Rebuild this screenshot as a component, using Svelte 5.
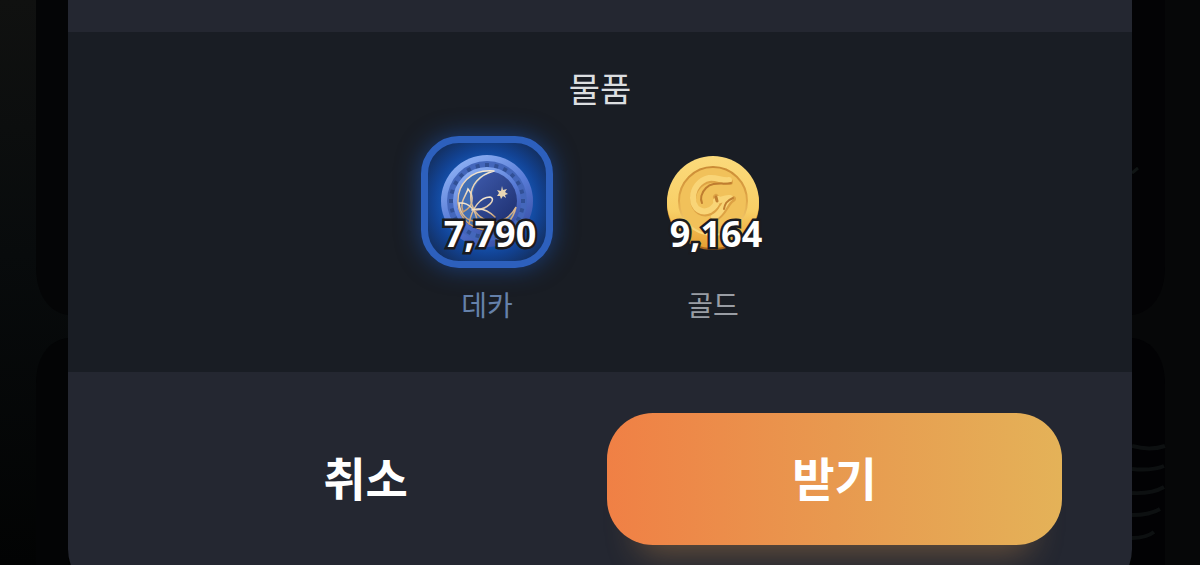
<script>
  const items = [
    { id: 'deca', label: '데카', amount: 7790 },
    { id: 'gold', label: '골드', amount: 9164 }
  ];

  // notches around the rim of the deca coin
  const notches = Array.from({ length: 24 }, (_, i) => i * 15);

  let selected = $state('deca');
</script>

<div class="screen">
  <svg class="backdrop left" viewBox="0 0 68 565" aria-hidden="true">
    <path d="M68 0H36V266C36 294 48 312 68 315Z" fill="#040506" />
    <path d="M68 338C48 340 36 358 36 384V565H68Z" fill="#030405" />
  </svg>
  <svg class="backdrop right" viewBox="0 0 68 565" aria-hidden="true">
    <path d="M0 0H33V266C33 294 21 312 0 315Z" fill="#030305" />
    <path d="M0 338C21 340 33 358 33 384V565H0Z" fill="#020204" />
    <path d="M0 173L6 168" stroke="#101515" stroke-width="3" />
    <g fill="none" stroke="#0d1011" stroke-width="4">
      <path d="M0 412Q18 417 33 412" transform="translate(0 34)" />
      <path d="M0 469Q20 471 32 466" />
      <path d="M0 493Q20 494 32 487" />
      <path d="M0 515Q18 515 28 509" />
      <path d="M0 538Q14 538 22 532" />
    </g>
  </svg>

  <main class="dialog">
    <section class="goods">
      <h2>물품</h2>
      <div class="items">
        {#each items as item}
          <button class="item" class:selected={selected === item.id} onclick={() => (selected = item.id)}>
            <span class="tile">
              {#if item.id === 'deca'}
                <svg viewBox="0 0 132 132" aria-hidden="true">
                  <defs>
                    <linearGradient id="deca-rim" x1="0.2" y1="0" x2="0.8" y2="1">
                      <stop offset="0" stop-color="#91b4f6" />
                      <stop offset="0.5" stop-color="#587bd6" />
                      <stop offset="1" stop-color="#34499f" />
                    </linearGradient>
                    <linearGradient id="deca-face" x1="0" y1="0" x2="1" y2="1">
                      <stop offset="0" stop-color="#4463b8" />
                      <stop offset="1" stop-color="#1a2a68" />
                    </linearGradient>
                    <linearGradient id="deca-line" x1="0" y1="0" x2="0" y2="1">
                      <stop offset="0" stop-color="#f4e7d2" />
                      <stop offset="1" stop-color="#c99a68" />
                    </linearGradient>
                  </defs>
                  <circle cx="66" cy="65" r="46" fill="url(#deca-rim)" />
                  <circle cx="66" cy="65" r="40" fill="#4467bb" />
                  {#each notches as angle}
                    <rect x="64" y="27" width="4" height="4" fill="#315096" transform="rotate({angle} 66 65)" />
                  {/each}
                  <circle cx="66" cy="65" r="34" fill="url(#deca-rim)" />
                  <circle cx="66" cy="65" r="30" fill="url(#deca-face)" />
                  <path d="M73 35C49 33 36 50 37 67C38 83 51 94 68 94C82 94 92 85 95 71C88 84 76 88 66 84C47 77 44 45 73 35Z" fill="#416eb4" />
                  <g fill="none" stroke="url(#deca-line)" stroke-width="1.5" stroke-linecap="round">
                    <path d="M73 35C49 33 36 49 37 67C38 83 51 94 68 94C82 94 92 85 95 71C88 84 77 88 67 85C44 77 42 43 73 35" />
                    <path d="M47 53C54 61 52 71 42 76C38 66 45 60 47 53Z" />
                    <path d="M38 67C48 66 55 74 56 85C46 86 39 78 38 67Z" />
                    <path d="M48 88C51 71 60 61 69 61C76 63 67 73 55 74" />
                    <path d="M51 74C60 71 67 74 74 81" />
                  </g>
                  <path d="M81 50L82 54L86 53L84 56L87 58L84 59L85 62L82 60L80 63L79 60L76 60L78 57L76 54L80 55Z" fill="#e9d6b4" />
                </svg>
              {:else}
                <svg viewBox="0 0 132 132" aria-hidden="true">
                  <defs>
                    <linearGradient id="gold-rim" x1="0" y1="0" x2="0" y2="1">
                      <stop offset="0" stop-color="#fbda7b" />
                      <stop offset="0.6" stop-color="#f8cf66" />
                      <stop offset="1" stop-color="#e69f32" />
                    </linearGradient>
                    <linearGradient id="gold-edge" x1="0" y1="0" x2="0" y2="1">
                      <stop offset="0" stop-color="#cb8c35" />
                      <stop offset="0.5" stop-color="#e1a849" />
                      <stop offset="1" stop-color="#fbdc80" />
                    </linearGradient>
                    <linearGradient id="gold-side" x1="0" y1="0" x2="0" y2="1">
                      <stop offset="0.5" stop-color="#e29b2f" />
                      <stop offset="1" stop-color="#a9641b" />
                    </linearGradient>
                  </defs>
                  <circle cx="66" cy="68" r="46" fill="url(#gold-side)" />
                  <circle cx="66" cy="66" r="46" fill="url(#gold-rim)" />
                  <circle cx="66" cy="65" r="34" fill="#f1c15a" stroke="url(#gold-edge)" stroke-width="2" />
                  <g fill="none" stroke-linecap="round" stroke-linejoin="round">
                    <path d="M83 46C75 46 70 43 63 44C52 46 46 55 46 64C47 75 56 80 64 76C70 73 73 65 69 61M72 67C77 67 78 62 86 63C79 66 78 79 67 83" stroke="#dda244" stroke-width="6" />
                    <path d="M82 44C75 45 70 41 62 42C52 44 46 53 46 62C46 73 55 78 63 74C68 71 70 67 71 63M69 65C75 65 77 61 83 62C77 66 76 77 67 81" stroke="#f9d577" stroke-width="6" />
                    <path d="M84 47C76 49 66 45 59 52C54 57 53 63 55 67" stroke="#bf7d30" stroke-width="2" />
                    <path d="M69 61L70 65" stroke="#bf7d30" stroke-width="3" />
                    <path d="M86 62C79 65 78 68 77 73" stroke="#bf7d30" stroke-width="2" />
                  </g>
                </svg>
              {/if}
              <span class="amount">{item.amount.toLocaleString('en-US')}</span>
            </span>
            <span class="label">{item.label}</span>
          </button>
        {/each}
      </div>
    </section>

    <footer class="actions">
      <button class="action cancel">취소</button>
      <button class="action accept">받기</button>
    </footer>
  </main>
</div>

<style>
  :global(body) {
    margin: 0;
    background: #080a0b;
  }

  .screen {
    position: relative;
    height: 100vh;
    padding: 0 68px;
    overflow: hidden;
    background: linear-gradient(180deg, #101110 0%, #080b0c 45%, #020303 100%);
    font-family: 'Noto Sans CJK KR', sans-serif;
    box-sizing: border-box;
  }

  .backdrop {
    position: absolute;
    top: 0;
    width: 68px;
  }

  .left {
    left: 0;
  }

  .right {
    right: 0;
    background: #060708;
  }

  .dialog {
    position: relative;
    padding-top: 32px;
    background: #242731;
    border-radius: 0 0 48px 48px;
  }

  .goods {
    display: flex;
    flex-direction: column;
    align-items: center;
    height: 340px;
    padding-top: 32px;
    background: #191d24;
    box-sizing: border-box;
  }

  h2 {
    margin: 0 0 24px;
    font-size: 34px;
    font-weight: 400;
    line-height: 48px;
    color: #dcdee0;
  }

  .items {
    display: flex;
    gap: 94px;
  }

  button {
    padding: 0;
    border: 0;
    background: none;
    font-family: inherit;
    cursor: pointer;
  }

  .item {
    display: flex;
    flex-direction: column;
    align-items: center;
    gap: 16px;
  }

  .tile {
    position: relative;
    display: block;
    width: 132px;
    height: 132px;
    border-radius: 38px;
  }

  .tile svg {
    display: block;
    width: 132px;
    height: 132px;
  }

  .selected .tile {
    background: radial-gradient(circle, #1660c8 35%, #124292 58%, #14274a 85%);
    box-shadow: 0 0 24px rgba(28, 88, 190, 0.6);
  }

  .selected .tile::after {
    content: '';
    position: absolute;
    inset: 0;
    border: 7px solid #2d60bd;
    border-radius: 38px;
    box-sizing: border-box;
  }

  .amount {
    position: absolute;
    right: 0;
    bottom: 12px;
    left: 6px;
    z-index: 1;
    font-family: 'Noto Sans', sans-serif;
    font-size: 36px;
    font-weight: 700;
    line-height: 44px;
    text-align: center;
    color: #fff;
    -webkit-text-stroke: 5px #1b1b20;
    stroke-linejoin: round;
    paint-order: stroke fill;
  }

  .label {
    font-size: 28px;
    font-weight: 400;
    line-height: 40px;
    color: #999da4;
  }

  .selected .label {
    color: #6581aa;
  }

  .actions {
    display: grid;
    grid-template-columns: 1fr 1fr;
    gap: 14px;
    padding: 41px 70px 52px;
  }

  .action {
    height: 132px;
    padding-bottom: 6px;
    border-radius: 46px;
    font-size: 46px;
    font-weight: 700;
    color: #fff;
  }

  .accept {
    background: linear-gradient(90deg, #f08045 0%, #e8994f 50%, #e4b258 100%);
    box-shadow: 0 40px 32px -32px rgba(232, 160, 80, 0.35);
  }
</style>
